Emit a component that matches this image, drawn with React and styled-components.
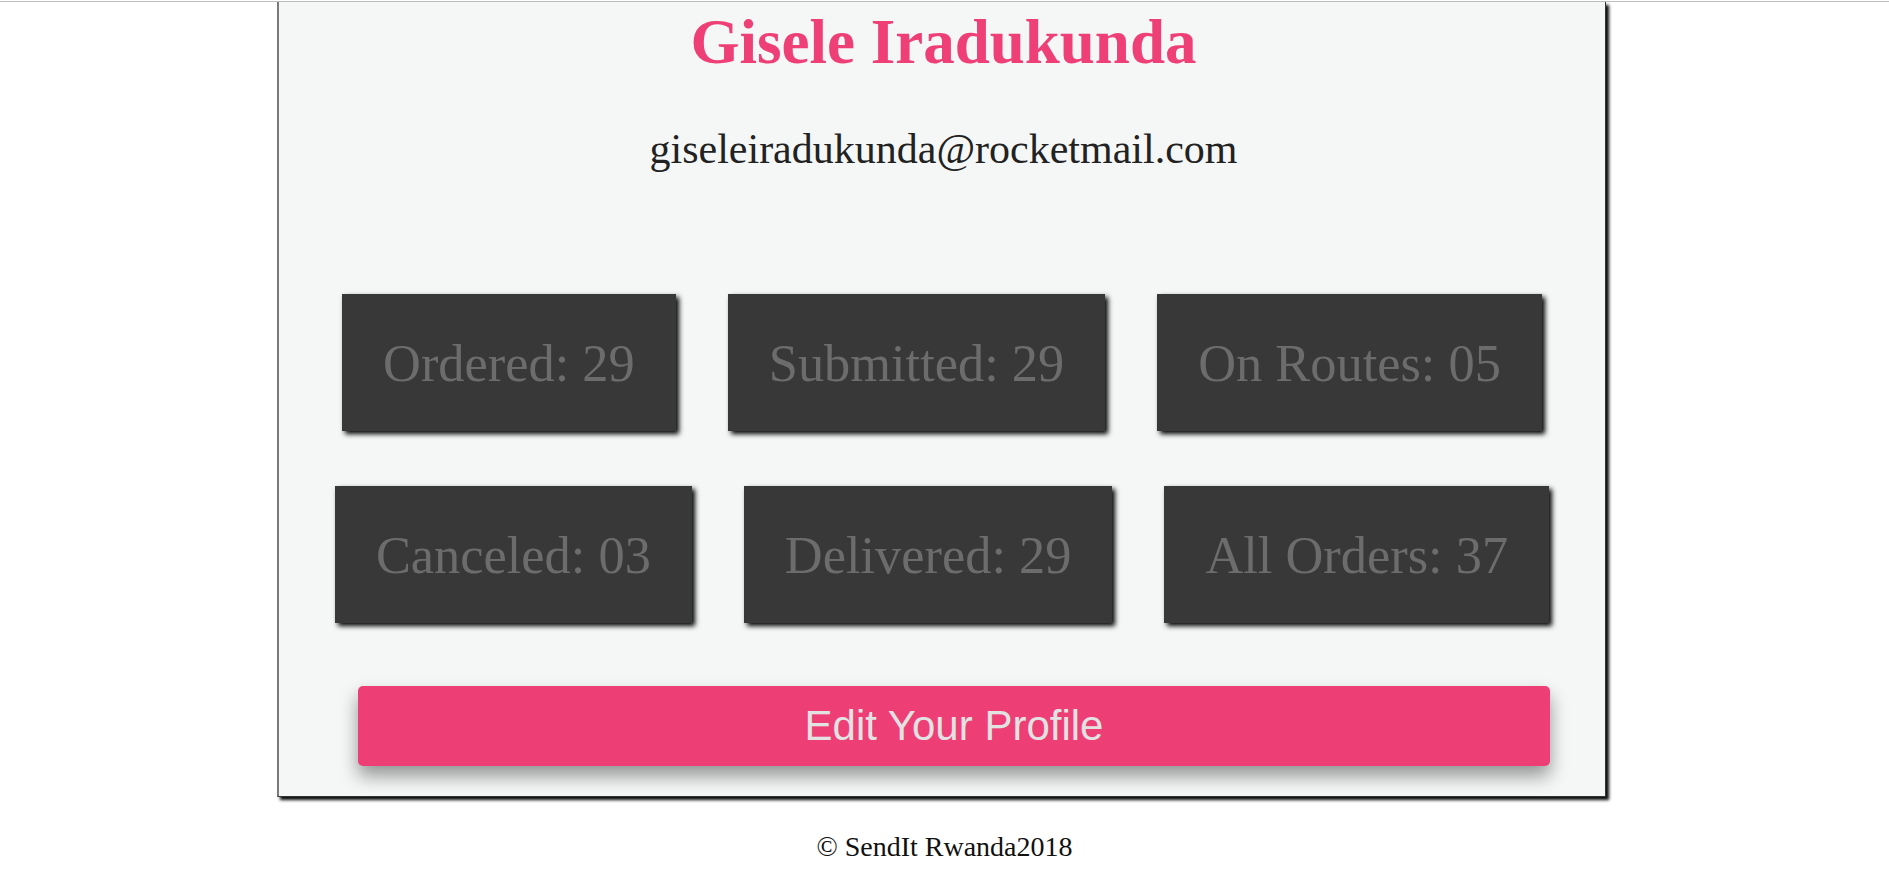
import React from "react";
import styled, { createGlobalStyle } from "styled-components";

const GlobalStyle = createGlobalStyle`
  html, body {
    margin: 0;
    padding: 0;
    background: #ffffff;
  }
  body {
    font-family: "Liberation Serif", "Times New Roman", serif;
    color: #222;
  }
`;

const Page = styled.div`
  display: flex;
  flex-direction: column;
  padding-top: 1px;
`;

const TopRule = styled.div`
  height: 1px;
  background: #bdbdbd;
`;

const Card = styled.section`
  width: 1326px;
  margin-left: 277px;
  background: #f5f7f7;
  border-left: 2px solid #7a7a7a;
  border-right: 1px solid #333;
  border-bottom: 1px solid #333;
  box-shadow: 3px 3px 3px #0a0a0a;
  display: flex;
  flex-direction: column;
  padding: 4px 0 30px;
`;

const Name = styled.h1`
  margin: 0;
  font-family: "Liberation Serif", "Times New Roman", serif;
  font-weight: 700;
  font-size: 63px;
  line-height: 72px;
  color: #ee3f76;
  text-align: center;
  margin-left: 3px;
`;

const Email = styled.p`
  margin: 47px 0 0 3px;
  font-size: 42px;
  line-height: 48px;
  color: #222;
  text-align: center;
`;

const Row = styled.div`
  display: flex;
  justify-content: center;
  gap: 52px;
  margin-top: ${(p) => p.$top}px;
`;

const Stat = styled.div`
  background: #383838;
  color: #6c6c6c;
  font-family: "Liberation Serif", "Times New Roman", serif;
  font-size: 52.4px;
  line-height: 60px;
  padding: 39px 41px 38px;
  box-shadow: 3px 3px 5px #000;
  white-space: nowrap;
`;

const EditButton = styled.button`
  margin: 63px 0 0 79px;
  width: 1192px;
  height: 80px;
  border: none;
  border-radius: 5px;
  background: #ee3e76;
  color: #e2e2e2;
  font-family: "Liberation Sans", Arial, sans-serif;
  font-size: 42px;
  box-shadow: 0 10px 18px rgba(0, 0, 0, 0.4);
  cursor: pointer;
  padding: 0;
`;

const Footer = styled.footer`
  margin-top: 34px;
  text-align: center;
  font-size: 28px;
  line-height: 32px;
  color: #111;
`;

const rowOne = ["Ordered: 29", "Submitted: 29", "On Routes: 05"];
const rowTwo = ["Canceled: 03", "Delivered: 29", "All Orders: 37"];

export default function App() {
  return (
    <>
      <GlobalStyle />
      <Page>
        <TopRule />
        <Card>
          <Name>Gisele Iradukunda</Name>
          <Email>giseleiradukunda@rocketmail.com</Email>
          <Row $top={121}>
            {rowOne.map((t) => (
              <Stat key={t}>{t}</Stat>
            ))}
          </Row>
          <Row $top={55}>
            {rowTwo.map((t) => (
              <Stat key={t}>{t}</Stat>
            ))}
          </Row>
          <EditButton>Edit Your Profile</EditButton>
        </Card>
        <Footer>© SendIt Rwanda2018</Footer>
      </Page>
    </>
  );
}
